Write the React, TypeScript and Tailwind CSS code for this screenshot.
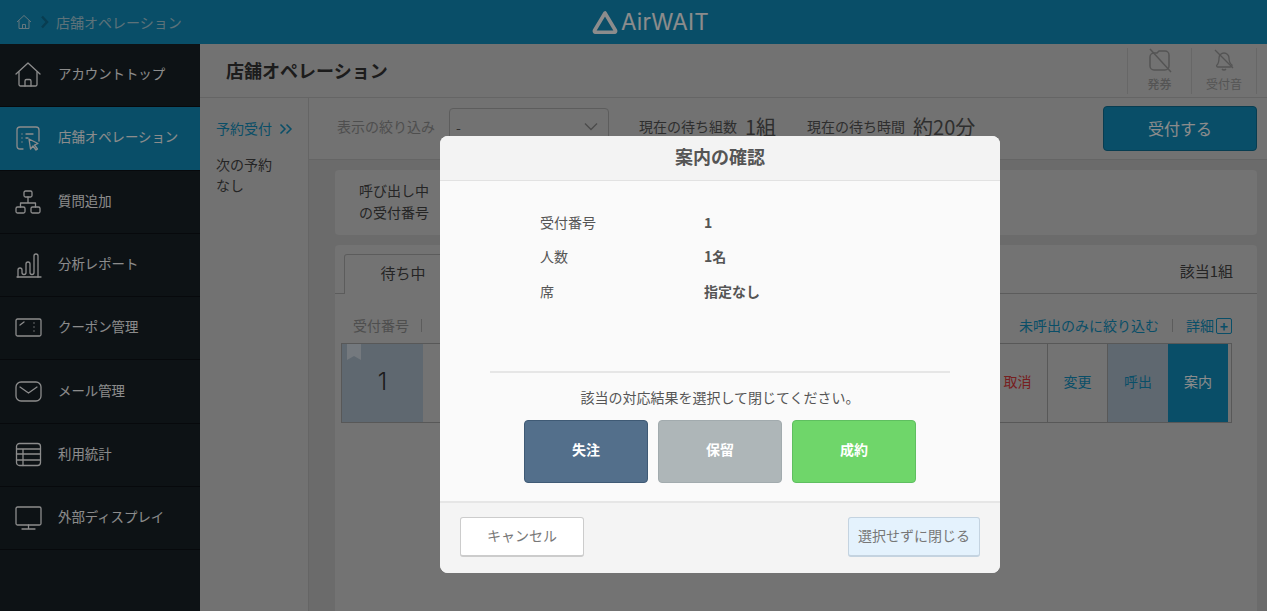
import type { ReactNode } from "react";

const iconProps = {
  width: 28,
  height: 28,
  viewBox: "0 0 28 28",
  fill: "none",
  stroke: "currentColor",
  strokeWidth: 1.3,
  strokeLinecap: "round" as const,
  strokeLinejoin: "round" as const,
};

const navItems: { label: string; icon: ReactNode; active?: boolean }[] = [
  {
    label: "アカウントトップ",
    icon: (
      <svg {...iconProps}>
        <path d="M2 13 14 2l12 11" />
        <path d="M5 11v12.5a1.5 1.5 0 0 0 1.500 1.500h15a1.500 1.500 0 0 0 1.500-1.500V11" />
        <path d="M11 25v-5a1.500 1.500 0 0 1 1.500-1.500h3A1.500 1.500 0 0 1 17 20v5" />
      </svg>
    ),
  },
  {
    label: "店舗オペレーション",
    active: true,
    icon: (
      <svg {...iconProps}>
        <path d="M9 25H6a3 3 0 0 1-3-3V6a3 3 0 0 1 3-3h16a3 3 0 0 1 3 3v11" />
        <path d="M8 10h.01M8 14h.01M8 18h.01M12 10h7M12 14h2" />
        <path d="m15 15 1.500 10 2.500-3 3 4 1.500-1-3-4 3.500-1.500z" />
      </svg>
    ),
  },
  {
    label: "質問追加",
    icon: (
      <svg {...iconProps}>
        <rect x="10" y="3" width="8" height="6" rx="1.500" />
        <rect x="2" y="19" width="9" height="6" rx="1.500" />
        <rect x="17" y="19" width="9" height="6" rx="1.500" />
        <path d="M14 9v6M6.500 19v-4h15v4" />
      </svg>
    ),
  },
  {
    label: "分析レポート",
    icon: (
      <svg {...iconProps}>
        <path d="M3 26h24" />
        <path d="M4 26v-7a2 2 0 0 1 4 0v2.500a2 2 0 0 0 4 0V13a2 2 0 0 1 4 0v8.500a2 2 0 0 0 4 0V5a2 2 0 0 1 4 0v21" />
      </svg>
    ),
  },
  {
    label: "クーポン管理",
    icon: (
      <svg {...iconProps}>
        <rect x="2" y="5" width="25" height="17" rx="1.500" />
        <path d="m6 11 4-3M20 9h.01M20 13h.01M20 17h.01" />
      </svg>
    ),
  },
  {
    label: "メール管理",
    icon: (
      <svg {...iconProps}>
        <rect x="2" y="4" width="25" height="19" rx="5" />
        <path d="m6 9 8.500 6L23 9" />
      </svg>
    ),
  },
  {
    label: "利用統計",
    icon: (
      <svg {...iconProps}>
        <rect x="2.500" y="2.500" width="24" height="22" rx="3" />
        <path d="M2.500 8h24M2.500 13h24M2.500 19h24M9 8v16.500" />
      </svg>
    ),
  },
  {
    label: "外部ディスプレイ",
    icon: (
      <svg {...iconProps}>
        <rect x="2" y="3" width="25" height="18" rx="1.500" />
        <path d="M14.500 21v3M8 25h13" />
      </svg>
    ),
  },
];

function Header() {
  return (
    <header className="relative flex h-[44px] shrink-0 items-center bg-[#128fbd] pl-[16px] text-white">
      <svg width="16" height="16" viewBox="0 0 16 16" fill="none" stroke="currentColor" strokeWidth="1" className="text-[#b7d9e6]">
        <path d="M1 8 8 1.500 15 8" />
        <path d="M3 6.500V14.500h10V6.500M6.500 14.500v-4h3v4" />
      </svg>
      <svg width="10" height="14" viewBox="0 0 10 14" fill="none" stroke="currentColor" strokeWidth="2.500" className="ml-[8px] text-[#0f6f94]">
        <path d="m2 1.500 5 5.500-5 5.500" />
      </svg>
      <span className="ml-[6px] text-[14px] text-[#a9cfdd]">店舗オペレーション</span>
      <div className="absolute left-[592px] top-[9px] flex items-center gap-[3px] text-white">
        <svg width="26" height="25" viewBox="0 0 26 25" fill="none" stroke="currentColor" strokeWidth="3.600" strokeLinejoin="round">
          <path d="M13 3 2.500 20.500a1.200 1.200 0 0 0 1 1.800h19a1.200 1.200 0 0 0 1-1.800z" />
        </svg>
        <span className="font-['Inter',sans-serif] text-[22.500px] leading-[26px] tracking-[0.2px]">AirWAIT</span>
      </div>
    </header>
  );
}

function Sidebar() {
  return (
    <nav className="w-[200px] shrink-0 bg-[#182127]">
      {navItems.map((item) => (
        <div
          key={item.label}
          className={`flex h-[63.300px] items-center gap-[16px] border-b border-[#0d1216] pl-[14px] text-[13.400px] text-white ${
            item.active ? "bg-[#128fbd]" : ""
          }`}
        >
          {item.icon}
          <span className="mb-[4px]">{item.label}</span>
        </div>
      ))}
    </nav>
  );
}

function Main() {
  return (
    <main className="flex min-w-0 flex-1 flex-col bg-[#cfcfcf]">
      <div className="flex h-[54px] shrink-0 items-center justify-between border-b border-[#b8b8b8] pl-[26px] pr-[10px]">
        <h1 className="text-[18px] font-bold text-[#333]">店舗オペレーション</h1>
        <div className="flex h-[46px] text-[#9a9a9a]">
          <div className="flex w-[65px] flex-col items-center border-x border-[#bcbcbc] text-[12px] font-medium leading-[14px]">
            <svg width="26" height="26" viewBox="0 0 26 26" fill="none" stroke="currentColor" strokeWidth="1.500">
              <path d="M3 9a4 4 0 0 1 4-4h3l2-2h6a4 4 0 0 1 4 4v11a4 4 0 0 1-4 4H7a4 4 0 0 1-4-4z" />
              <path d="M3 1l21 23M9 11h.01M9 15h.01" />
            </svg>
            <span className="mt-[3px]">発券</span>
          </div>
          <div className="flex w-[65px] flex-col items-center border-r border-[#bcbcbc] text-[12px] leading-[14px]">
            <svg width="24" height="26" viewBox="0 0 24 26" fill="none" stroke="currentColor" strokeWidth="1.300">
              <path d="M5 17c2-2 2-4 2-7a5 5 0 0 1 10 0c0 3 0 5 3 7 0 1-1 2-2 2H6c-1 0-2-1-1-2z" />
              <path d="M10 21a2.500 2.500 0 0 0 4 0M3 2l18 18" />
            </svg>
            <span className="mt-[3px]">受付音</span>
          </div>
        </div>
      </div>

      <div className="flex min-h-0 flex-1">
        <aside className="w-[109px] shrink-0 border-r border-[#b8b8b8] pl-[16px] pt-[20px] text-[14px] leading-[21px] text-[#444]">
          <div className="flex items-center gap-[7px] text-[#128fbd]">
            予約受付
            <svg width="14" height="12" viewBox="0 0 14 12" fill="none" stroke="currentColor" strokeWidth="1.500">
              <path d="m1.500 1.500 4.500 4.500-4.500 4.500M7.500 1.500 12 6l-4.500 4.500" />
            </svg>
          </div>
          <p className="mt-[15px]">
            次の予約
            <br />
            なし
          </p>
        </aside>

        <div className="flex min-w-0 flex-1 flex-col bg-[#c4c4c4]">
          <div className="flex h-[62px] shrink-0 items-center justify-between border-b border-[#b8b8b8] bg-[#cfcfcf] pl-[28px] pr-[10px] text-[14px] text-[#555]">
            <div className="mb-[4px] flex items-center">
              <span className="text-[#8f8f8f]">表示の絞り込み</span>
              <div className="ml-[14px] mt-[3px] flex h-[40px] w-[160px] items-center justify-between rounded-[4px] border border-[#aaa] pb-[2px] pl-[6px] pr-[10px]">
                -
                <svg width="14" height="10" viewBox="0 0 14 10" fill="none" stroke="#8a8a8a" strokeWidth="1.400">
                  <path d="m1 1.500 6 6 6-6" />
                </svg>
              </div>
              <span className="ml-[30px]">現在の待ち組数</span>
              <span className="ml-[8px] text-[20px] leading-none">1組</span>
              <span className="ml-[31px]">現在の待ち時間</span>
              <span className="ml-[8px] text-[20px] leading-none">約20分</span>
            </div>
            <div className="flex h-[45px] w-[154px] items-center justify-center rounded-[4px] border border-[#0f6f94] bg-[#128fbd] pb-[2px] text-[16px] text-white">
              受付する
            </div>
          </div>

          <div className="flex min-h-0 flex-1 flex-col pl-[26px] pr-[10px] pt-[10px]">
            <div className="flex h-[65px] shrink-0 items-center rounded-[4px] bg-[#d1d1d1] pb-[3px] pl-[24px] text-[14px] leading-[22px] text-[#444]">
              <p>
                呼び出し中
                <br />
                の受付番号
              </p>
            </div>

            <section className="mt-[10px] flex flex-1 flex-col rounded-t-[4px] bg-[#d1d1d1]">
              <div className="flex h-[49px] shrink-0 items-end justify-between border-b border-[#a8a8a8] px-[9px]">
                <div className="mb-[-1px] flex h-[40px] w-[118px] items-center justify-center rounded-t-[3px] border border-b-0 border-[#a8a8a8] bg-[#d1d1d1] pb-[3px] text-[15px] text-[#444]">
                  待ち中
                </div>
                <span className="mb-[11px] mr-[15px] text-[15px] text-[#444]">該当1組</span>
              </div>

              <div className="flex h-[49px] shrink-0 items-center justify-between pl-[18px] pr-[25px] pt-[14px] text-[14px]">
                <div className="flex items-center gap-[12px] text-[#8f8f8f]">
                  受付番号
                  <span className="h-[13px] w-px bg-[#a8a8a8]" />
                </div>
                <div className="flex items-center text-[#128fbd]">
                  未呼出のみに絞り込む
                  <span className="mx-[13px] h-[13px] w-px bg-[#a8a8a8]" />
                  詳細
                  <span className="ml-[2px] flex h-[16px] w-[16px] items-center justify-center rounded-[2px] border border-[#128fbd] text-[14px] font-bold leading-none">
                    +
                  </span>
                </div>
              </div>

              <div className="ml-[6px] mr-[25px] flex h-[80px] shrink-0 border border-[#a0a0a0] pr-[3px] text-[14px]">
                <div className="relative flex w-[81px] items-center justify-center bg-[#adbdcc] pb-[2px] font-['Inter',sans-serif] text-[24px] font-light text-[#333]">
                  <svg width="14" height="16" viewBox="0 0 14 16" className="absolute left-[5px] top-0" fill="#d3dde6">
                    <path d="M0 0h14v16l-7-4-7 4z" />
                  </svg>
                  1
                </div>
                <div className="flex-1" />
                <div className="flex w-[60px] items-center justify-center border-r border-[#a0a0a0] pb-[4px] text-[#d83a3a]">取消</div>
                <div className="flex w-[60px] items-center justify-center border-r border-[#a0a0a0] pb-[4px] text-[#128fbd]">変更</div>
                <div className="flex w-[60px] items-center justify-center bg-[#adbdcc] pb-[4px] text-[#128fbd]">呼出</div>
                <div className="flex w-[60px] items-center justify-center bg-[#128fbd] pb-[4px] text-white">案内</div>
              </div>
            </section>
          </div>
        </div>
      </div>
    </main>
  );
}

function Row({ label, value }: { label: string; value: string }) {
  return (
    <div className="flex h-[34.500px] items-center text-[14px]">
      <span className="w-[164px] text-[#555]">{label}</span>
      <span className="font-bold text-[#555]">{value}</span>
    </div>
  );
}

function ConfirmModal() {
  return (
    <div className="absolute inset-0 bg-black/45">
      <div className="absolute left-[440px] top-[136px] flex h-[437px] w-[560px] flex-col overflow-hidden rounded-[8px] bg-[#fafafa]">
        <div className="flex h-[45px] shrink-0 items-center justify-center border-b border-[#e2e2e2] bg-[#f3f3f3] pb-[4px] text-[18px] font-bold text-[#555]">
          案内の確認
        </div>
        <div className="flex flex-1 flex-col items-center">
          <div className="mt-[24px] h-[168px] w-[460px] border-b-2 border-[#e6e6e6] pl-[50px]">
            <Row label="受付番号" value="1" />
            <Row label="人数" value="1名" />
            <Row label="席" value="指定なし" />
          </div>
          <p className="mt-[14px] text-[14px] leading-[20px] text-[#555]">該当の対応結果を選択して閉じてください。</p>
          <div className="mt-[13px] flex gap-[10px] text-[14px] font-bold text-white">
            <button className="h-[63px] w-[124px] rounded-[4px] border border-[#3f5a75] bg-[#536f8b] pb-[4px]">失注</button>
            <button className="h-[63px] w-[124px] rounded-[4px] border border-[#a2abae] bg-[#aeb6b8] pb-[4px]">保留</button>
            <button className="h-[63px] w-[124px] rounded-[4px] border border-[#5fbf60] bg-[#6fd66a] pb-[4px]">成約</button>
          </div>
        </div>
        <div className="flex h-[72px] shrink-0 items-start justify-between border-t-2 border-[#e6e6e6] bg-[#f4f4f4] px-[20px] pt-[14px] text-[14px] text-[#777]">
          <button className="h-[40px] w-[124px] rounded-[3px] border border-b-2 border-[#ccc] bg-white pb-[3px]">キャンセル</button>
          <button className="h-[40px] w-[132px] rounded-[3px] border border-b-2 border-[#c4d3e0] bg-[#e4f2fd] pb-[3px]">選択せずに閉じる</button>
        </div>
      </div>
    </div>
  );
}

export default function App() {
  return (
    <div className="relative flex h-[611px] w-[1267px] flex-col overflow-hidden font-['Noto_Sans_CJK_JP','Noto_Sans',sans-serif]">
      <Header />
      <div className="flex min-h-0 flex-1">
        <Sidebar />
        <Main />
      </div>
      <ConfirmModal />
    </div>
  );
}
